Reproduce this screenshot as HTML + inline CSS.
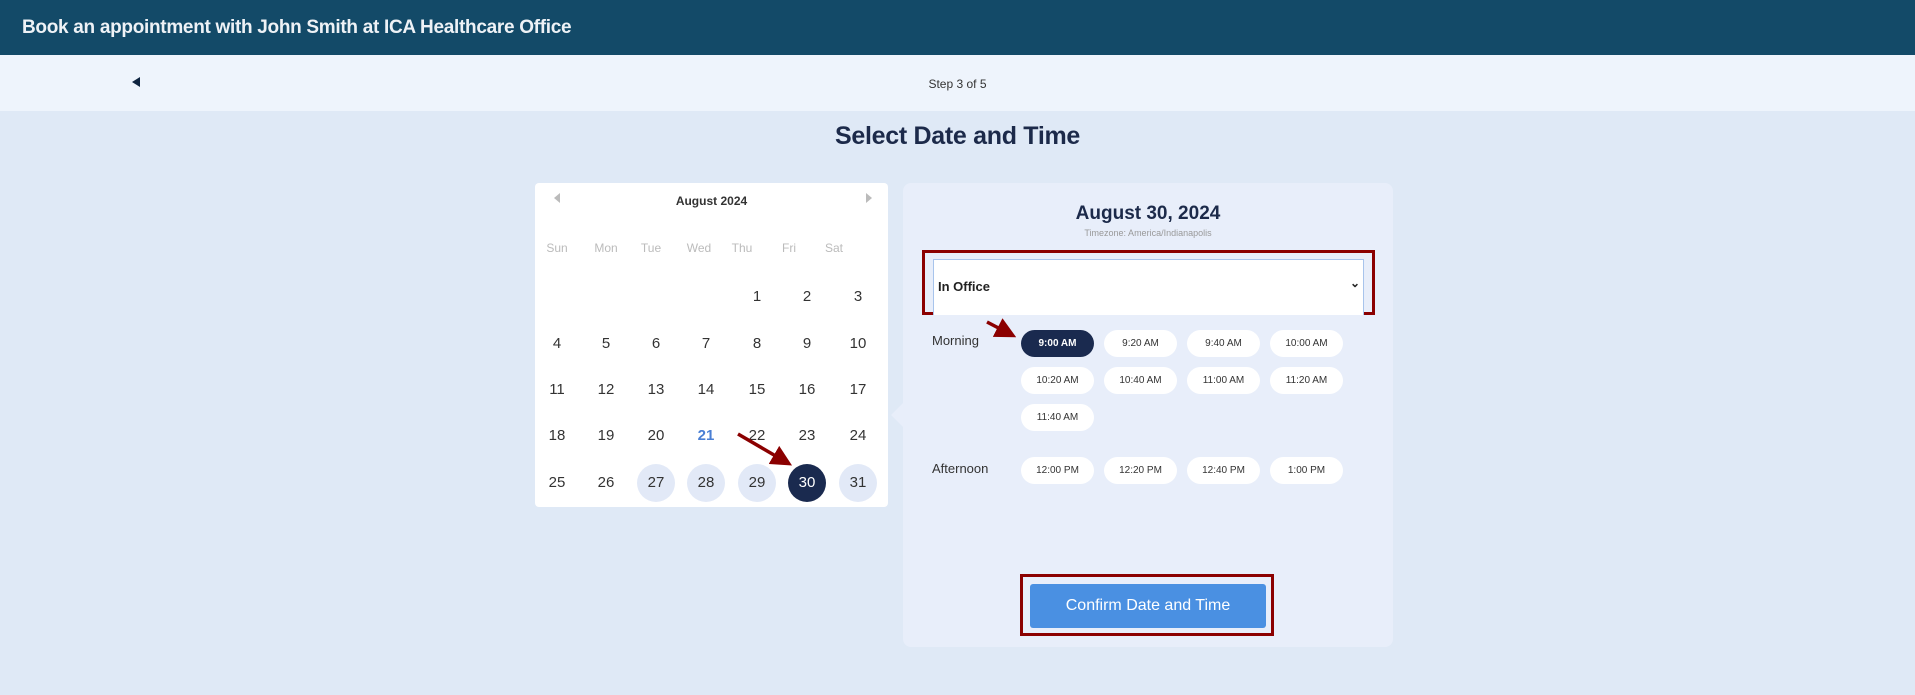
<!DOCTYPE html>
<html><head><style>
body{margin:0;width:1915px;height:695px;background:#dfe9f6;font-family:"Liberation Sans",sans-serif;position:relative;overflow:hidden}
.hdr{position:absolute;left:0;top:0;width:1915px;height:55px;background:#134a68;color:#eef2f6;font-weight:bold;font-size:19px;line-height:55px;padding-left:22px;box-sizing:border-box;letter-spacing:-0.3px}
.sub{position:absolute;left:0;top:55px;width:1915px;height:56px;background:#eef4fc}
.abs{position:absolute}
.cal{left:535px;top:183px;width:353px;height:324px;background:#fff;border-radius:4px}
.c{position:absolute;width:38px;height:38px;line-height:38px;text-align:center;font-size:15px;color:#333;border-radius:50%;transform:translate(-19px,-19px)}
.wd{position:absolute;font-size:12px;color:#bbb;transform:translateX(-50%)}
.panel{left:903px;top:183px;width:490px;height:464px;background:#e8eefa;border-radius:8px}
.slot{position:absolute;width:73px;height:27px;line-height:27px;border-radius:14px;background:#fff;font-size:10px;text-align:center;color:#333}
</style></head><body>
<div class="hdr">Book an appointment with John Smith at ICA Healthcare Office</div>
<div class="sub"></div>
<div class="abs" style="left:132px;top:77px;width:0;height:0;border-top:5px solid transparent;border-bottom:5px solid transparent;border-right:8px solid #0e2440"></div>
<div class="abs" style="left:0;width:1915px;top:77px;text-align:center;font-size:12px;color:#333">Step 3 of 5</div>
<div class="abs" style="left:0;width:1915px;top:122px;text-align:center;font-size:25px;font-weight:bold;color:#1c2a4a;letter-spacing:-0.3px">Select Date and Time</div>

<div class="abs cal"></div>
<div class="abs" style="left:535px;width:353px;top:194px;text-align:center;font-size:12px;font-weight:bold;color:#333">August 2024</div>
<div class="abs" style="left:554px;top:193px;width:0;height:0;border-top:5px solid transparent;border-bottom:5px solid transparent;border-right:6px solid #bbb"></div>
<div class="abs" style="left:866px;top:193px;width:0;height:0;border-top:5px solid transparent;border-bottom:5px solid transparent;border-left:6px solid #bbb"></div>
<div class="wd" style="left:557px;top:241px">Sun</div><div class="wd" style="left:606px;top:241px">Mon</div><div class="wd" style="left:651px;top:241px">Tue</div><div class="wd" style="left:699px;top:241px">Wed</div><div class="wd" style="left:742px;top:241px">Thu</div><div class="wd" style="left:789px;top:241px">Fri</div><div class="wd" style="left:834px;top:241px">Sat</div>
<div class="c" style="left:757px;top:297px">1</div><div class="c" style="left:807px;top:297px">2</div><div class="c" style="left:858px;top:297px">3</div>
<div class="c" style="left:557px;top:344px">4</div><div class="c" style="left:606px;top:344px">5</div><div class="c" style="left:656px;top:344px">6</div><div class="c" style="left:706px;top:344px">7</div><div class="c" style="left:757px;top:344px">8</div><div class="c" style="left:807px;top:344px">9</div><div class="c" style="left:858px;top:344px">10</div>
<div class="c" style="left:557px;top:390px">11</div><div class="c" style="left:606px;top:390px">12</div><div class="c" style="left:656px;top:390px">13</div><div class="c" style="left:706px;top:390px">14</div><div class="c" style="left:757px;top:390px">15</div><div class="c" style="left:807px;top:390px">16</div><div class="c" style="left:858px;top:390px">17</div>
<div class="c" style="left:557px;top:436px">18</div><div class="c" style="left:606px;top:436px">19</div><div class="c" style="left:656px;top:436px">20</div><div class="c" style="left:706px;top:436px;color:#4a7fd4;font-weight:bold">21</div><div class="c" style="left:757px;top:436px">22</div><div class="c" style="left:807px;top:436px">23</div><div class="c" style="left:858px;top:436px">24</div>
<div class="c" style="left:557px;top:483px">25</div><div class="c" style="left:606px;top:483px">26</div><div class="c" style="left:656px;top:483px;background:#e2e9f7">27</div><div class="c" style="left:706px;top:483px;background:#e2e9f7">28</div><div class="c" style="left:757px;top:483px;background:#e2e9f7">29</div><div class="c" style="left:807px;top:483px;background:#1a2a4f;color:#fff">30</div><div class="c" style="left:858px;top:483px;background:#e2e9f7">31</div>

<div class="abs panel"></div>
<div class="abs" style="left:891px;top:403px;width:0;height:0;border-top:12px solid transparent;border-bottom:12px solid transparent;border-right:12px solid #e8eefa"></div>
<div class="abs" style="left:903px;width:490px;top:203px;text-align:center;font-size:19px;font-weight:bold;color:#1c2a4a">August 30, 2024</div>
<div class="abs" style="left:903px;width:490px;top:228px;text-align:center;font-size:9px;color:#999">Timezone: America/Indianapolis</div>
<div class="abs" style="left:922px;top:250px;width:453px;height:65px;border:3px solid #8b0000;box-sizing:border-box"></div>
<div class="abs" style="left:933px;top:259px;width:431px;height:56px;background:#fff;border:1px solid #a8c4ec;border-bottom:none;box-sizing:border-box"></div>
<div class="abs" style="left:938px;top:279px;font-size:13px;font-weight:bold;color:#222">In Office</div>
<div class="abs" style="left:1350px;top:276px;font-size:12px;font-weight:bold;color:#222">&#8964;</div>
<div class="abs" style="left:932px;top:333px;font-size:13px;color:#333">Morning</div>
<div class="abs" style="left:932px;top:461px;font-size:13px;color:#333">Afternoon</div>
<div class="slot" style="left:1021px;top:330px;background:#1a2a4f;color:#fff;font-weight:bold">9:00 AM</div>
<div class="slot" style="left:1104px;top:330px">9:20 AM</div><div class="slot" style="left:1187px;top:330px">9:40 AM</div><div class="slot" style="left:1270px;top:330px">10:00 AM</div>
<div class="slot" style="left:1021px;top:367px">10:20 AM</div><div class="slot" style="left:1104px;top:367px">10:40 AM</div><div class="slot" style="left:1187px;top:367px">11:00 AM</div><div class="slot" style="left:1270px;top:367px">11:20 AM</div>
<div class="slot" style="left:1021px;top:404px">11:40 AM</div>
<div class="slot" style="left:1021px;top:457px">12:00 PM</div><div class="slot" style="left:1104px;top:457px">12:20 PM</div><div class="slot" style="left:1187px;top:457px">12:40 PM</div><div class="slot" style="left:1270px;top:457px">1:00 PM</div>
<div class="abs" style="left:1020px;top:574px;width:254px;height:62px;border:3px solid #8b0000;box-sizing:border-box"></div>
<div class="abs" style="left:1030px;top:584px;width:236px;height:44px;background:#4a90e2;border-radius:3px;color:#fff;font-size:16px;text-align:center;line-height:44px">Confirm Date and Time</div>
<svg class="abs" style="left:0;top:0" width="1915" height="695">
<defs><marker id="a" markerWidth="6" markerHeight="6" refX="4" refY="3" orient="auto"><path d="M0,0 L6,3 L0,6 z" fill="#8b0000"/></marker></defs>
<line x1="987" y1="322" x2="1010" y2="334" stroke="#8b0000" stroke-width="3.5" marker-end="url(#a)"/>
<line x1="738" y1="434" x2="786" y2="462" stroke="#8b0000" stroke-width="3.5" marker-end="url(#a)"/>
</svg>
</body></html>
